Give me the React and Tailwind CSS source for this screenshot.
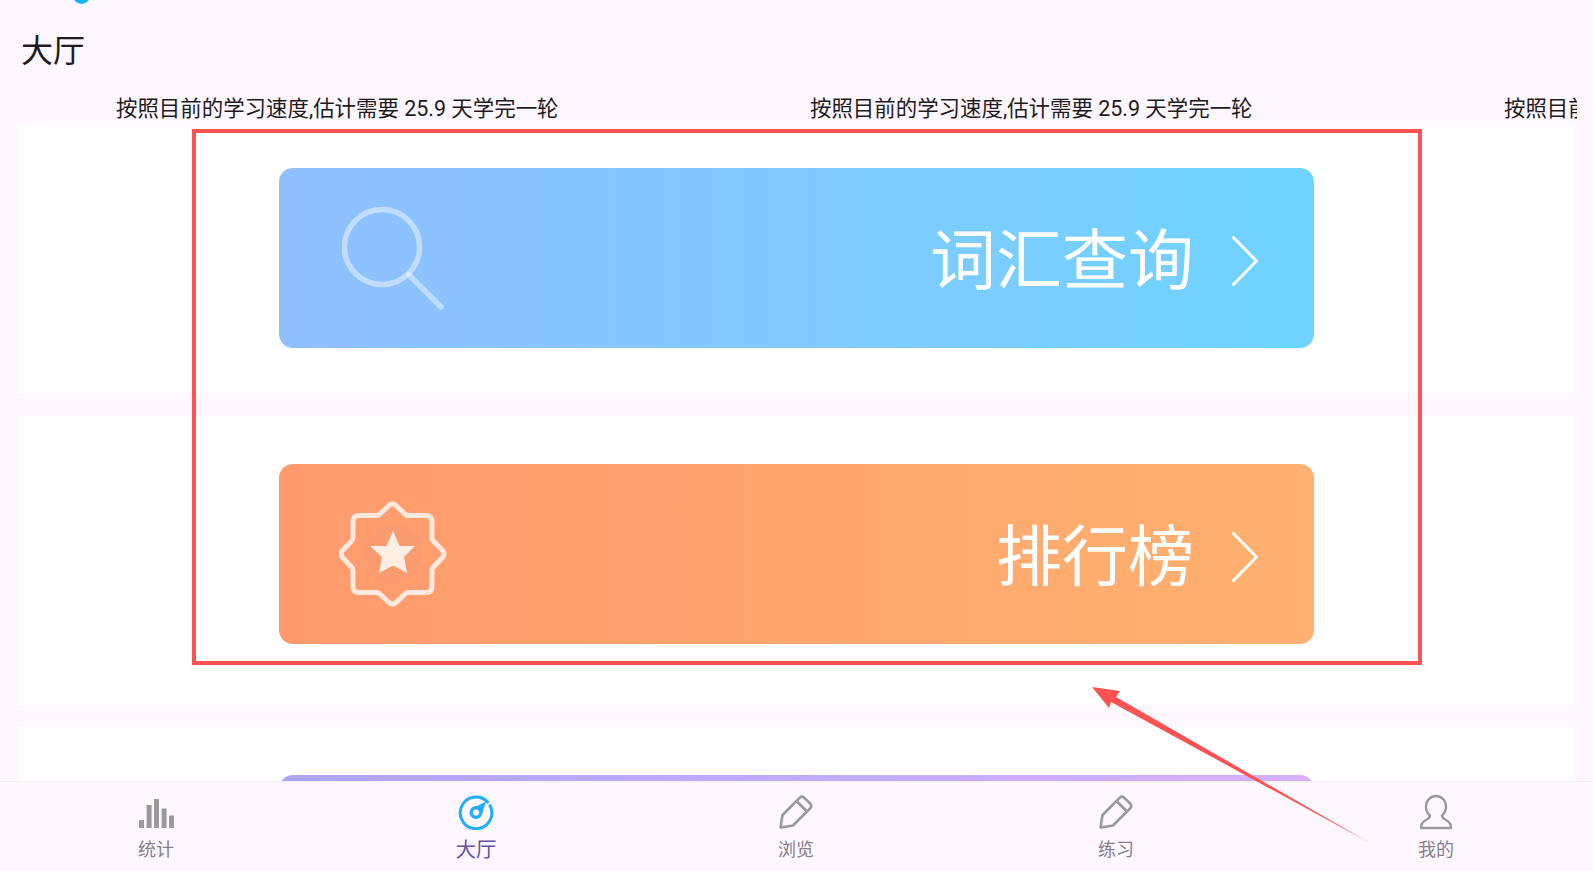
function SearchIcon() {
  return (
    <svg width="112" height="112" viewBox="0 0 112 112" fill="none" className="mt-[6px] shrink-0">
      <circle cx="43" cy="42" r="37.5" stroke="#ffffff" strokeOpacity="0.45" strokeWidth="5.5" />
      <path d="M70 70 L102 102" stroke="#ffffff" strokeOpacity="0.45" strokeWidth="5.5" strokeLinecap="round" />
    </svg>
  )
}

function BadgeIcon() {
  return (
    <svg width="108" height="108" viewBox="0 0 108 108" fill="none" className="shrink-0">
      <circle cx="54" cy="54" r="30" fill="#f39a75" fillOpacity="0.35" />
      <path
        d="M49.5 6 Q53.5 1.5 57.5 6 L66 14 Q67 15.5 69 15.5 L87 15.5 Q93 15.5 93 21.5 L93 38 Q93 40 94.5 41 L103 50 Q107 54 103 58 L94.5 67 Q93 68 93 70 L93 86.5 Q93 92.5 87 92.5 L69 92.5 Q67 92.5 66 94 L57.5 102 Q53.5 106.5 49.5 102 L41 94 Q40 92.5 38 92.5 L20 92.5 Q14 92.5 14 86.5 L14 70 Q14 68 12.5 67 L4 58 Q0 54 4 50 L12.5 41 Q14 40 14 38 L14 21.5 Q14 15.5 20 15.5 L38 15.5 Q40 15.5 41 14 Z"
        stroke="#ffe9de"
        strokeWidth="5"
        strokeLinejoin="round"
      />
      <path
        d="M54 31 L60.5 46 L76 46 L65 57 L68 73 L54 65.5 L40 73 L43 57 L31 46 L47.5 46 Z"
        fill="#ffeee5"
      />
    </svg>
  )
}

function Chevron() {
  return (
    <svg width="26" height="50" viewBox="0 0 26 50" fill="none" className="mt-[6px] shrink-0">
      <path d="M1.5 1.5 L24.5 25 L1.5 48.5" stroke="#ffffff" strokeWidth="3" strokeLinecap="round" strokeLinejoin="round" />
    </svg>
  )
}

function BarsIcon() {
  const bars = [
    { x: 0, h: 8 },
    { x: 7.6, h: 23 },
    { x: 15, h: 29 },
    { x: 22.6, h: 19.5 },
    { x: 30, h: 12.5 },
  ]
  return (
    <svg width="35" height="36" viewBox="0 0 35 36">
      {bars.map((bar) => (
        <rect key={bar.x} x={bar.x} y={33 - bar.h} width="5" height={bar.h} fill="#9a9a9a" />
      ))}
    </svg>
  )
}

function GaugeIcon() {
  return (
    <svg width="36" height="36" viewBox="0 0 36 36" fill="none" className="-mt-[2px]">
      <path d="M29.5 8 A15.8 15.8 0 1 0 32 11.5" stroke="#20aeff" strokeWidth="3" strokeLinecap="round" />
      <circle cx="18" cy="18.5" r="4.8" stroke="#20aeff" strokeWidth="3.4" />
      <path d="M28 7.5 L24.5 19 L18 12.5 Z" fill="#20aeff" />
    </svg>
  )
}

function PencilIcon() {
  return (
    <svg width="36" height="36" viewBox="0 0 36 36" fill="none" className="-mt-[2px]">
      <path
        d="M2.5 33.5 L4.5 21 L22 3.5 Q24 1.8 26 3.5 L32.5 10 Q34.2 12 32.5 14 L15 31.5 Z"
        stroke="#9a9a9a"
        strokeWidth="2.6"
        strokeLinejoin="round"
      />
      <path d="M18.5 7 L29 17.5" stroke="#9a9a9a" strokeWidth="2.6" />
    </svg>
  )
}

function UserIcon() {
  return (
    <svg width="34" height="36" viewBox="0 0 34 36" fill="none" className="-mt-[2px]">
      <path
        d="M11 21.5 C8.5 19.5 7 16 7 12.5 C7 6.5 11.5 2 17 2 C22.5 2 27 6.5 27 12.5 C27 16 25.5 19.5 23 21.5 C23 24 25 25 27 26 C30 27.5 32 30 32 34 L2 34 C2 30 4 27.5 7 26 C9 25 11 24 11 21.5 Z"
        stroke="#9a9a9a"
        strokeWidth="2.4"
        strokeLinejoin="round"
      />
    </svg>
  )
}

const tips = [0, 1, 2]

const navItems = [
  { label: '统计', icon: <BarsIcon /> },
  { label: '大厅', icon: <GaugeIcon />, active: true },
  { label: '浏览', icon: <PencilIcon /> },
  { label: '练习', icon: <PencilIcon /> },
  { label: '我的', icon: <UserIcon /> },
]

function App() {
  return (
    <div
      lang="zh-CN"
      className="relative flex h-[871px] w-full flex-col overflow-hidden bg-[#fef7ff] font-['Roboto','Noto_Sans_CJK_SC',sans-serif] text-[#1d1b20]"
    >
      <div className="h-[4px] shrink-0 overflow-hidden">
        <div className="ml-[73px] -mt-[13px] size-[17px] rounded-full bg-[#14b4ff]" />
      </div>

      <h1 className="ml-[21px] mt-[24px] h-[46px] shrink-0 text-[32px] leading-[46px] font-normal">大厅</h1>

      <div className="ml-[116px] mr-[16px] mt-[20px] flex h-[30px] shrink-0 overflow-hidden text-[21.45px] leading-[30px]">
        {tips.map((tip) => (
          <span key={tip} className="w-[694px] shrink-0 whitespace-nowrap">
            按照目前的学习速度,估计需要 25.9 天学完一轮
          </span>
        ))}
      </div>

      <div className="flex min-h-0 flex-1 flex-col gap-[23px] overflow-hidden pl-[19px] pr-[19px]">
        <div className="h-[269px] shrink-0 bg-white pt-[44px]">
          <div className="mx-auto flex h-[180px] w-[1035px] items-center rounded-[14px] bg-linear-to-r from-[#90bfff] to-[#6ed3ff] pl-[60px] pr-[56px] text-[66px] text-white">
            <SearchIcon />
            <span className="ml-auto mr-[38px] mt-[6px]">词汇查询</span>
            <Chevron />
          </div>
        </div>
        <div className="h-[289px] shrink-0 bg-white pt-[48px]">
          <div className="mx-auto flex h-[180px] w-[1035px] items-center rounded-[14px] bg-linear-to-r from-[#ff9a6d] to-[#ffb170] pl-[60px] pr-[56px] text-[66px] text-white">
            <BadgeIcon />
            <span className="ml-auto mr-[38px] mt-[6px]">排行榜</span>
            <Chevron />
          </div>
        </div>
        <div className="-mt-px h-[200px] shrink-0 bg-white pt-[48px]">
          <div className="mx-auto h-[180px] w-[1035px] rounded-[14px] bg-linear-to-r from-[#aea4fb] to-[#d6b0fb]" />
        </div>
      </div>

      <nav className="flex h-[90px] shrink-0 justify-between border-t border-[#f3eef5] bg-[#fef7ff] pl-[134px] pr-[135px] pt-[13px]">
        {navItems.map((item) => (
          <div key={item.label} className="flex w-[44px] flex-col items-center">
            <div className="flex h-[36px] items-center justify-center">{item.icon}</div>
            <span
              className={`mt-[6px] whitespace-nowrap leading-[26px] ${item.active ? 'text-[20.5px] text-[#6750a4]' : 'text-[18px] text-[#85808a]'}`}
            >
              {item.label}
            </span>
          </div>
        ))}
      </nav>

      {/* red annotation drawn on top of the screenshot */}
      <div className="absolute left-[192px] top-[129px] h-[536px] w-[1230px] border-4 border-[#fb5252]" />
      <svg className="absolute left-0 top-0" width="1593" height="871" viewBox="0 0 1593 871">
        <polygon
          points="1092,687 1120,691 1116,697 1370,843 1111,702 1109,708"
          fill="#fb5252"
        />
      </svg>
    </div>
  )
}

export default App
